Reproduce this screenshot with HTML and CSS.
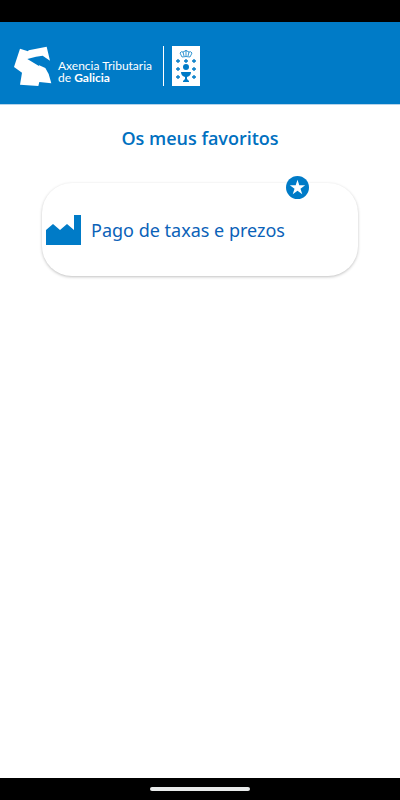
FILE: index.html
```html
<!DOCTYPE html>
<html lang="gl">
<head>
    <meta charset="UTF-8">
    <meta name="viewport" content="width=device-width, initial-scale=1.0">
    <title>Os meus favoritos</title>
    <link rel="stylesheet" href="styles.css">
</head>
<body>
    <div class="status-bar"></div>
    <header class="header">
        <svg class="logo" viewBox="0 0 114 120" aria-hidden="true">
            <path fill="#fff" d="M18 8L42 16L44 13L98 2L108 44L86 29L66 32L40 39L76 61L74 57L94 66L104 84L112 112L76 108L73 120L18 116L24 80L0 63Z"/>
        </svg>
        <div class="brand">
            <span>Axencia Tributaria</span>
            <span>de <strong>Galicia</strong></span>
        </div>
        <div class="divider"></div>
        <svg class="shield" viewBox="0 0 28 40" aria-hidden="true">
            <path fill="#fff" d="M0 0H28V40H0Z"/>
            <g fill="none" stroke="#007bc7">
                <path d="M10 11L8 7Q9 5 11 6Q14 3 17 6Q19 5 20 7L18 11Q14 10 10 11ZM14 4V10M11 6L12 10M17 6L16 10" stroke-width=".8"/>
                <path stroke-width="1.3" d="M6 13v4M4 15h4M14 13v4M12 15h4M22 13v4M20 15h4M6 21v4M4 23h4M22 21v4M20 23h4M6 29v4M4 31h4M22 29v4M20 31h4"/>
            </g>
            <g fill="#007bc7">
                <circle cx="14" cy="21" r="3"/>
                <path d="M9 26H19Q19 30 15 31V33L17 35V36H11V35L13 33V31Q9 30 9 26Z"/>
            </g>
        </svg>
    </header>
    <main class="content">
        <h1 class="title">Os meus favoritos</h1>
        <div class="card">
            <a class="card-link" href="#">
                <svg class="factory" viewBox="0 0 35 30" aria-hidden="true">
                    <path fill="#007bc7" d="M0 15L7 9L14 15L21 9L28 15V0H35V30H0Z"/>
                </svg>
                <span>Pago de taxas e prezos</span>
            </a>
            <button class="favorite" type="button" aria-label="Quitar de favoritos">
                <svg viewBox="0 0 24 24" aria-hidden="true">
                    <path fill="#fff" d="M12 4L13.900 9.700H20L15.100 13.300L17 19L12 15.500L7 19L8.900 13.300L4 9.700H10.100Z"/>
                </svg>
            </button>
        </div>
    </main>
    <footer class="nav-bar"><div class="handle"></div></footer>
</body>
</html>
```
FILE: styles.css
```css
* { box-sizing: border-box; }
body { margin: 0; min-height: 100vh; display: flex; flex-direction: column; background: #fff; font-family: "Noto Sans", sans-serif; }
.status-bar { height: 22px; background: #000; }
.header { display: flex; align-items: center; height: 83px; padding: 6px 14px 0; background: #007bc7; border-bottom: 1px solid #b5d3ea; color: #fff; }
.logo { width: 38px; height: 40px; }
.brand { display: flex; flex-direction: column; margin: 12px 0 0 6px; width: 98px; font-family: Lato, sans-serif; font-size: 12px; line-height: 12px; white-space: nowrap; }
.divider { width: 1px; height: 40px; margin: 0 8px 0 7px; background: #fff; }
.shield { width: 28px; height: 40px; }
.content { flex: 1; padding: 20px 42px; }
.title { margin: 0 0 32px; font-family: "Open Sans", sans-serif; font-size: 18px; line-height: 26px; font-weight: 600; text-align: center; color: #0070c0; }
.card { position: relative; border-radius: 30px; box-shadow: 0 1px 3px rgba(0, 0, 0, 0.25); }
.card-link { display: flex; align-items: center; gap: 10px; min-height: 93px; padding: 0 4px; color: #0b62b8; font-size: 18px; text-decoration: none; }
.factory { width: 35px; height: 30px; }
.favorite { position: absolute; top: -7px; right: 49px; width: 23px; height: 23px; padding: 0; border: none; border-radius: 50%; background: #007bc7; cursor: pointer; }
.favorite svg { display: block; width: 23px; height: 23px; }
.nav-bar { display: flex; align-items: center; justify-content: center; height: 22px; background: #000; }
.handle { width: 100px; height: 4px; border-radius: 2px; background: #e8eaea; }
```
